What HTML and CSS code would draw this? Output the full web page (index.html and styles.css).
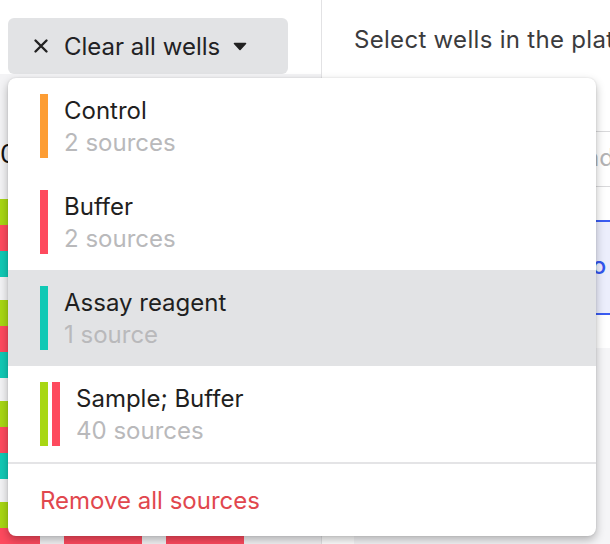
FILE: index.html
```html
<!DOCTYPE html>
<html lang="en">
<head>
<meta charset="utf-8">
<title>Plate sources</title>
<link rel="stylesheet" href="styles.css">
</head>
<body>
<div class="app">
  <aside class="left">
    <div class="toolbar">
      <button class="clear-btn" type="button">
        <svg class="x-icon" width="16" height="16" viewBox="0 0 16 16"><path d="M2.5 2.5 L13.5 13.5 M13.5 2.5 L2.5 13.5" stroke="#222" stroke-width="2.4" stroke-linecap="round" fill="none"/></svg>
        <span class="btn-label">Clear all wells</span>
        <svg class="caret" width="14" height="9" viewBox="0 0 14 9"><path d="M1.5 1.5 L12.5 1.5 L7 7.5 Z" fill="#222" stroke="#222" stroke-width="1.6" stroke-linejoin="round"/></svg>
      </button>
    </div>
    <div class="plate">
      <div class="plate-head"><span class="row-label">0</span></div>
      <div class="wells">
        <div class="well"><i class="s-green"></i><i class="s-red"></i><i class="s-teal"></i></div>
        <div class="well"><i class="s-green"></i><i class="s-red"></i><i class="s-teal"></i></div>
        <div class="well"><i class="s-green"></i><i class="s-red"></i><i class="s-teal"></i></div>
        <div class="well"><i class="s-green"></i><i class="s-red"></i><i class="s-teal"></i></div>
        <div class="well"><i class="s-green"></i><i class="s-red"></i><i class="s-teal"></i></div>
        <div class="well"><i class="s-green"></i><i class="s-red"></i><i class="s-teal"></i></div>
        <div class="well"><i class="s-green"></i><i class="s-red"></i><i class="s-teal"></i></div>
        <div class="well"><i class="s-green"></i><i class="s-red"></i><i class="s-teal"></i></div>
        <div class="well"><i class="s-green"></i><i class="s-red"></i><i class="s-teal"></i></div>
        <div class="well"><i class="s-green"></i><i class="s-red"></i><i class="s-teal"></i></div>
        <div class="well"><i class="s-green"></i><i class="s-red"></i><i class="s-teal"></i></div>
        <div class="well"><i class="s-green"></i><i class="s-red"></i><i class="s-teal"></i></div>
      </div>
    </div>
  </aside>

  <main class="right">
    <p class="hint">Select wells in the plate to add sources</p>
    <div class="search">Find a source</div>
    <div class="selected-source">Add to plate</div>
    <div class="lower"></div>
  </main>

  <div class="menu" role="menu">
    <div class="menu-item">
      <div class="swatches"><span class="swatch c-orange"></span></div>
      <div class="item-text"><div class="item-title">Control</div><div class="item-sub">2 sources</div></div>
    </div>
    <div class="menu-item">
      <div class="swatches"><span class="swatch c-red"></span></div>
      <div class="item-text"><div class="item-title">Buffer</div><div class="item-sub">2 sources</div></div>
    </div>
    <div class="menu-item is-hover">
      <div class="swatches"><span class="swatch c-teal"></span></div>
      <div class="item-text"><div class="item-title">Assay reagent</div><div class="item-sub">1 source</div></div>
    </div>
    <div class="menu-item">
      <div class="swatches"><span class="swatch c-green"></span><span class="swatch c-red"></span></div>
      <div class="item-text"><div class="item-title">Sample; Buffer</div><div class="item-sub">40 sources</div></div>
    </div>
    <div class="menu-footer">Remove all sources</div>
  </div>
</div>
</body>
</html>
```

FILE: styles.css
```css
* { box-sizing: border-box; }

html, body {
  margin: 0;
  padding: 0;
  background: #ffffff;
}

body {
  font-family: "Inter", "Liberation Sans", sans-serif;
  color: #1f1f21;
}

.app {
  position: relative;
  display: flex;
  width: 610px;
  height: 544px;
  overflow: hidden;
}

/* ---------- left panel ---------- */
.left {
  flex: 0 0 322px;
  border-right: 1px solid #e2e2e4;
  display: flex;
  flex-direction: column;
  overflow: hidden;
}

.toolbar {
  padding: 18px 0 0 8px;
  height: 78px;
}

.clear-btn {
  display: flex;
  align-items: center;
  width: 280px;
  height: 56px;
  padding: 0 0 0 25px;
  border: none;
  border-radius: 6px;
  background: #e2e3e5;
  font-family: inherit;
  font-size: 24px;
  color: #222224;
  cursor: pointer;
}

.x-icon { flex: none; }
.btn-label { margin-left: 15px; }
.caret { flex: none; margin-left: 13px; margin-top: 1px; }

.plate {
  flex: 1;
  background: #f3f3f5;
}

.plate-head {
  height: 125px;
  padding-top: 65px;
}

.row-label {
  display: block;
  font-size: 26px;
  line-height: 30px;
  color: #111;
  margin-left: 0;
}

.wells {
  display: grid;
  grid-template-columns: repeat(3, 78px);
  grid-auto-rows: 78px;
  column-gap: 24px;
  row-gap: 23px;
  margin-left: -38px;
}

.well {
  display: flex;
  flex-direction: column;
}

.well i { flex: 1; display: block; }
.s-green { background: #a8d713; }
.s-red { background: #fe4a5e; }
.s-teal { background: #10c9b5; }

/* ---------- right panel ---------- */
.right {
  flex: 1;
  min-width: 0;
  padding-left: 32px;
  display: flex;
  flex-direction: column;
}

.hint {
  margin: 0;
  padding-top: 24px;
  font-size: 24px;
  line-height: 32px;
  letter-spacing: 0.3px;
  color: #3b3b3d;
  white-space: nowrap;
}

.search {
  margin-top: 75px;
  height: 56px;
  border-top: 1px solid #d9d9db;
  border-bottom: 1px solid #d9d9db;
  padding: 10px 0 0 211px;
  font-size: 24px;
  line-height: 32px;
  color: #b4b4b6;
  white-space: nowrap;
}

.selected-source {
  margin-top: 33px;
  height: 95px;
  border-top: 2px solid #3a5cf2;
  border-bottom: 2px solid #3a5cf2;
  background: #eceefc;
  padding: 28px 0 0 177px;
  font-size: 24px;
  line-height: 32px;
  font-weight: 500;
  color: #3356ef;
  white-space: nowrap;
}

.lower {
  margin-top: 33px;
  flex: 1;
  background: #f5f5f7;
}

/* ---------- dropdown menu ---------- */
.menu {
  position: absolute;
  left: 8px;
  top: 78px;
  width: 588px;
  background: #ffffff;
  border-radius: 8px;
  box-shadow: 0 4px 10px rgba(0, 0, 0, 0.28), 0 0 2px rgba(0, 0, 0, 0.12);
  overflow: hidden;
}

.menu-item {
  display: flex;
  gap: 16px;
  height: 96px;
  padding: 16px 32px;
}

.menu-item.is-hover { background: #e2e3e5; }

.swatches {
  display: flex;
  gap: 4px;
}

.swatch {
  width: 8px;
  height: 64px;
}

.c-orange { background: #fd9d34; }
.c-red { background: #fe4a5e; }
.c-teal { background: #10c9b5; }
.c-green { background: #a8d713; }

.item-text {
  font-size: 24px;
  line-height: 32px;
  padding-top: 1px;
}

.item-title { color: #1f1f21; }
.item-sub { color: #b9b9bb; }

.menu-footer {
  border-top: 2px solid #e4e4e6;
  height: 74px;
  padding: 21px 32px 0;
  font-size: 24px;
  line-height: 32px;
  color: #e1474e;
}
```
